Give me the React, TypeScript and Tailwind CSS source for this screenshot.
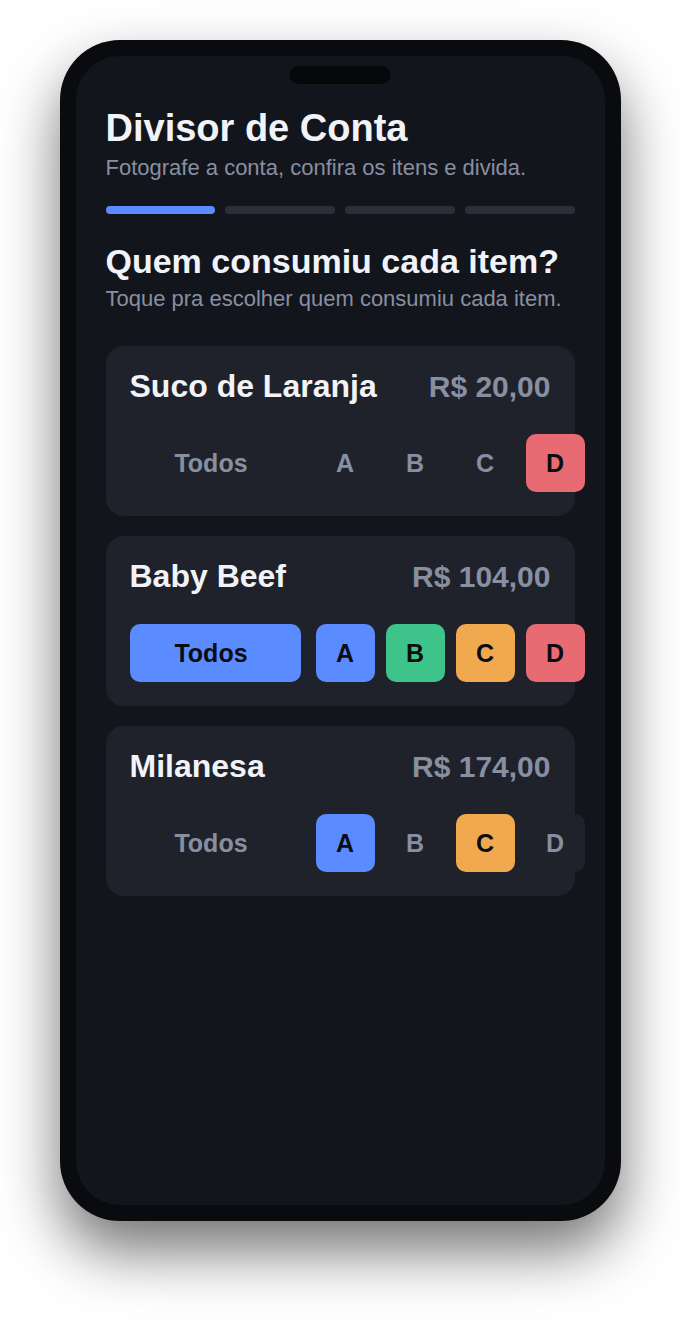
import { useState } from 'react'

type Person = 'A' | 'B' | 'C' | 'D'

const PEOPLE: Person[] = ['A', 'B', 'C', 'D']

// cor de cada pessoa quando selecionada
const PERSON_BG: Record<Person, string> = {
  A: 'bg-[#5b8cff]',
  B: 'bg-[#3ec48a]',
  C: 'bg-[#f0a94f]',
  D: 'bg-[#e86b74]',
}

const INITIAL_ITEMS = [
  { id: 1, name: 'Suco de Laranja', price: 'R$ 20,00', people: ['D'] as Person[] },
  { id: 2, name: 'Baby Beef', price: 'R$ 104,00', people: ['A', 'B', 'C', 'D'] as Person[] },
  { id: 3, name: 'Milanesa', price: 'R$ 174,00', people: ['A', 'C'] as Person[] },
]

function ItemCard({
  name,
  price,
  people,
  onToggle,
  onToggleAll,
}: {
  name: string
  price: string
  people: Person[]
  onToggle: (p: Person) => void
  onToggleAll: () => void
}) {
  const all = people.length === PEOPLE.length

  return (
    <div className="bg-[#1f222a] rounded-[18px] px-6 pt-6 pb-6">
      <div className="flex items-baseline justify-between">
        <span className="text-[32px] leading-none font-bold text-[#f1f3f8]">{name}</span>
        <span className="text-[30px] leading-none font-bold text-[#878fa1]">{price}</span>
      </div>

      {/* linha de pessoas (transborda o card, como no app) */}
      <div className="flex mt-8">
        <button
          onClick={onToggleAll}
          className={`w-[171px] h-[58px] shrink-0 rounded-[10px] pt-[2px] pr-2 text-[25px] font-bold ${
            all ? 'bg-[#5b8cff] text-[#0b0d12]' : 'bg-[#1f222a] text-[#878fa1]'
          }`}
        >
          Todos
        </button>
        <div className="flex shrink-0 gap-[11px] ml-[15px]">
          {PEOPLE.map((p) => {
            const on = people.includes(p)
            return (
              <button
                key={p}
                onClick={() => onToggle(p)}
                className={`w-[59px] h-[58px] shrink-0 rounded-[10px] pt-[2px] text-[25px] font-bold ${
                  on ? `${PERSON_BG[p]} text-[#0b0d12]` : 'bg-[#1f222a] text-[#878fa1]'
                }`}
              >
                {p}
              </button>
            )
          })}
        </div>
      </div>
    </div>
  )
}

export default function App() {
  const [items, setItems] = useState(INITIAL_ITEMS)

  const toggle = (id: number, p: Person) => {
    setItems((prev) =>
      prev.map((it) =>
        it.id !== id
          ? it
          : {
              ...it,
              people: it.people.includes(p) ? it.people.filter((x) => x !== p) : [...it.people, p],
            }
      )
    )
  }

  const toggleAll = (id: number) => {
    setItems((prev) =>
      prev.map((it) =>
        it.id !== id ? it : { ...it, people: it.people.length === PEOPLE.length ? [] : [...PEOPLE] }
      )
    )
  }

  return (
    <div
      className="min-h-[1330px] bg-white flex justify-center pt-[40px]"
      style={{ fontFamily: '"Liberation Sans", Arial, sans-serif' }}
    >
      {/* moldura do celular */}
      <div className="w-[561px] h-[1181px] bg-[#0a0b0e] rounded-[60px] p-4 shadow-[0_30px_60px_rgba(0,0,0,0.55)]">
        <div className="relative h-full bg-[#13151c] rounded-[44px] px-[30px] pt-[50px]">
          {/* notch */}
          <div className="absolute top-[10px] left-1/2 -translate-x-1/2 w-[101px] h-[18px] rounded-full bg-[#07080a]" />

          <h1 className="text-[38px] leading-[44px] font-bold text-[#f1f3f8]">Divisor de Conta</h1>
          <p className="mt-[4px] text-[22px] leading-[28px] text-[#878fa1]">
            Fotografe a conta, confira os itens e divida.
          </p>

          {/* etapas */}
          <div className="grid grid-cols-4 gap-[10px] mt-6">
            <div className="h-2 rounded-full bg-[#5b8cff]" />
            <div className="h-2 rounded-full bg-[#2b2f3a]" />
            <div className="h-2 rounded-full bg-[#2b2f3a]" />
            <div className="h-2 rounded-full bg-[#2b2f3a]" />
          </div>

          <h2 className="mt-[27px] text-[34px] leading-[40px] font-bold text-[#f1f3f8]">
            Quem consumiu cada item?
          </h2>
          <p className="mt-[4px] text-[22px] leading-[28px] text-[#878fa1]">
            Toque pra escolher quem consumiu cada item.
          </p>

          <div className="flex flex-col gap-5 mt-[33px]">
            {items.map((it) => (
              <ItemCard
                key={it.id}
                name={it.name}
                price={it.price}
                people={it.people}
                onToggle={(p) => toggle(it.id, p)}
                onToggleAll={() => toggleAll(it.id)}
              />
            ))}
          </div>
        </div>
      </div>
    </div>
  )
}
